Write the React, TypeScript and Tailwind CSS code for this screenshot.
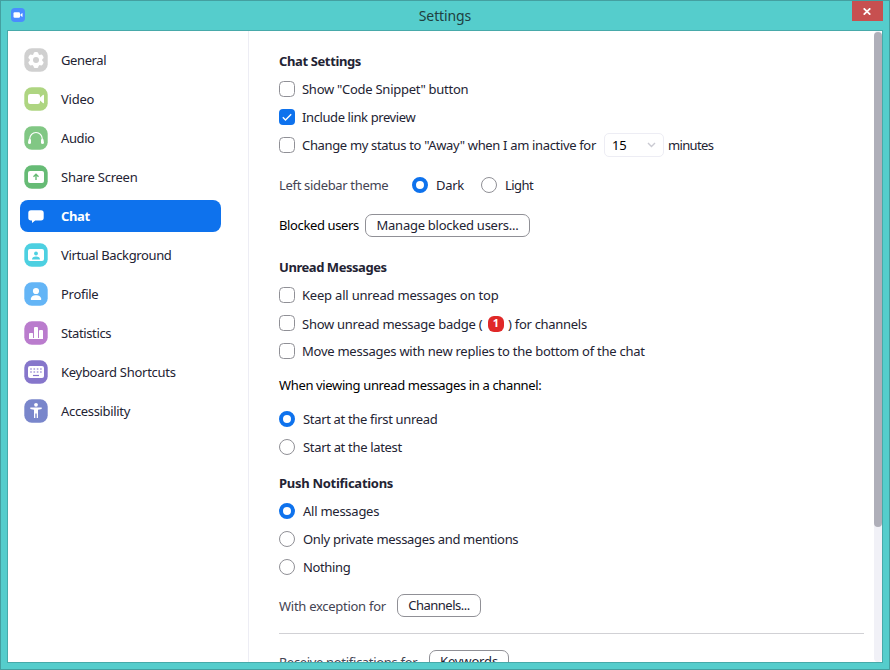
import type { ReactNode } from "react";

function Tile({ color, children }: { color: string; children: ReactNode }) {
  return (
    <svg width="24" height="24" viewBox="0 0 24 24" className="shrink-0">
      <rect x="0.3" y="0.3" width="23.4" height="23.4" rx="7.5" fill={color} />
      {children}
    </svg>
  );
}

const items: { label: string; spacing: string; icon: ReactNode; active?: boolean }[] = [
  {
    label: "General",
    spacing: "tracking-[-0.4px]",
    icon: (
      <Tile color="#d0d0d0">
        <g fill="#fff">
          {[0, 60, 120].map((a) => (
            <rect key={a} x="9.6" y="4" width="4.8" height="16" rx="1.5" transform={`rotate(${a} 12 12)`} />
          ))}
          <circle cx="12" cy="12" r="6.3" />
        </g>
        <circle cx="12" cy="12" r="3" fill="#d0d0d0" />
      </Tile>
    ),
  },
  {
    label: "Video",
    spacing: "tracking-[-0.25px]",
    icon: (
      <Tile color="#aed581">
        <rect x="4" y="7" width="12" height="10" rx="2.2" fill="#fff" />
        <path d="M16 10.500 18.900 8q1.100-.7 1.100.5v7q0 1.200-1.100.5L16 13.500z" fill="#fff" />
      </Tile>
    ),
  },
  {
    label: "Audio",
    spacing: "tracking-[-0.4px]",
    icon: (
      <Tile color="#81c784">
        <path d="M5.700 15V13a6.300 6.500 0 0 1 12.600 0v2" fill="none" stroke="#fff" strokeWidth="1.200" />
        <path d="M4.600 13.200q2.400-.8 2.400 1v2.300q0 1.500-1.500 1.500T4 16.500z" fill="#fff" />
        <path d="M19.400 13.200q-2.400-.8-2.400 1v2.300q0 1.500 1.500 1.500t1.500-1.500z" fill="#fff" />
      </Tile>
    ),
  },
  {
    label: "Share Screen",
    spacing: "tracking-[-0.25px]",
    icon: (
      <Tile color="#66bb75">
        <rect x="4" y="6" width="16" height="12" rx="2" fill="#fff" />
        <path d="M12 15V10M9.500 11.700 12 9.300l2.500 2.400" fill="none" stroke="#66bb75" strokeWidth="1.400" />
      </Tile>
    ),
  },
  {
    label: "Chat",
    spacing: "tracking-[-0.4px]",
    active: true,
    icon: (
      <svg width="24" height="24" viewBox="0 0 24 24" className="shrink-0">
        <path d="M7 6.200h10a2.700 2.700 0 0 1 2.700 2.700v4.800a2.700 2.700 0 0 1-2.700 2.700h-5.800L8 19v-2.600H7a2.700 2.700 0 0 1-2.700-2.700V8.900A2.700 2.700 0 0 1 7 6.200z" fill="#fff" />
      </svg>
    ),
  },
  {
    label: "Virtual Background",
    spacing: "tracking-[-0.38px]",
    icon: (
      <Tile color="#4dd0e1">
        <rect x="4" y="6" width="16" height="12" rx="2" fill="#fff" />
        <circle cx="12" cy="10.500" r="1.900" fill="#4dd0e1" />
        <path d="M8 16.500q0-3 4-3t4 3z" fill="#4dd0e1" />
      </Tile>
    ),
  },
  {
    label: "Profile",
    spacing: "tracking-[-0.28px]",
    icon: (
      <Tile color="#64b5f6">
        <circle cx="12" cy="9" r="3.100" fill="#fff" />
        <path d="M6.800 17.600c-.5-5.800 10.900-5.800 10.400 0q-.1.500-.7.500h-9q-.6 0-.7-.5z" fill="#fff" />
      </Tile>
    ),
  },
  {
    label: "Statistics",
    spacing: "tracking-[-0.38px]",
    icon: (
      <Tile color="#ba7ccd">
        <path d="M5 18v-5q0-1 1-1h2.400q.6 0 .6.600V17h1V7q0-1 1-1h2q1 0 1 1v10h1V10q0-1 1-1h2q1 0 1 1v8z" fill="#fff" />
      </Tile>
    ),
  },
  {
    label: "Keyboard Shortcuts",
    spacing: "tracking-[-0.28px]",
    icon: (
      <Tile color="#8676cb">
        <rect x="4" y="6" width="16" height="12" rx="2" fill="#fff" />
        <path d="M6.200 9h12M6.200 12h12" stroke="#8676cb" strokeOpacity="0.75" strokeWidth="1.500" strokeDasharray="1.600 1.700" />
        <path d="M9 15.500h6" stroke="#8676cb" strokeWidth="1.200" />
      </Tile>
    ),
  },
  {
    label: "Accessibility",
    spacing: "tracking-[-0.33px]",
    icon: (
      <Tile color="#7986cb">
        <circle cx="12" cy="5.800" r="1.900" fill="#fff" />
        <path d="M6.300 8.500h11.400v1.400L14 10.800V19h-1.300v-4.500h-1.400V19H10v-8.200l-3.700-.9z" fill="#fff" />
      </Tile>
    ),
  },
];

function Check({ on = false }: { on?: boolean }) {
  return (
    <svg width="16" height="16" viewBox="0 0 16 16" className="mr-[7px] shrink-0">
      {on ? (
        <>
          <rect width="16" height="16" rx="4" fill="#0e72ed" />
          <path d="M3.800 8.200l2.700 2.700 5.700-5.700" fill="none" stroke="#fff" strokeWidth="1.400" />
        </>
      ) : (
        <rect x="0.500" y="0.500" width="15" height="15" rx="4" fill="#fff" stroke="#909096" />
      )}
    </svg>
  );
}

function Radio({ on = false }: { on?: boolean }) {
  return (
    <svg width="16" height="16" viewBox="0 0 16 16" className="mr-2 shrink-0">
      {on ? (
        <circle cx="8" cy="8" r="6" fill="#fff" stroke="#0e72ed" strokeWidth="4" />
      ) : (
        <circle cx="8" cy="8" r="7.500" fill="#fff" stroke="#909096" />
      )}
    </svg>
  );
}

function Row({ className = "", children }: { className?: string; children: ReactNode }) {
  return <div className={`flex h-7 shrink-0 items-center whitespace-nowrap ${className}`}>{children}</div>;
}

function T({ className = "", children }: { className?: string; children: ReactNode }) {
  return <span className={`pt-[2px] ${className}`}>{children}</span>;
}

function Btn({ className, children }: { className: string; children: ReactNode }) {
  return (
    <button className={`flex h-[23px] items-center justify-center rounded-[7px] border border-[#909096] bg-white text-[#232333] ${className}`}>
      <T>{children}</T>
    </button>
  );
}

export default function App() {
  return (
    <div className="flex h-[670px] w-[890px] flex-col border border-[#449fa0] bg-[#55cdcc] px-[6px] pb-[6px] font-['Noto_Sans',sans-serif] text-[13px] text-[#232333]">
      <header className="flex h-[29px] shrink-0 justify-between">
        <svg width="14" height="14" viewBox="0 0 14 14" className="mt-[7px] ml-1">
          <rect width="14" height="14" rx="4" fill="#4a8cff" />
          <rect x="2.500" y="4.300" width="6.500" height="5.400" rx="1.200" fill="#fff" />
          <path d="M9.500 6.300 11.500 5v4l-2-1.300z" fill="#fff" />
        </svg>
        <h1 className="ml-[13px] pt-[4px] text-[14px] leading-[22px] tracking-[-0.1px] text-[#20403f]">Settings</h1>
        <button className="flex h-5 w-[31px] items-center justify-center bg-[#c75050]">
          <svg width="8" height="7" viewBox="0 0 8 7">
            <path d="M.7.3 7.300 6.700M7.300.3.7 6.700" stroke="#fff" strokeWidth="1.700" />
          </svg>
        </button>
      </header>
      <div className="flex min-h-0 flex-1 overflow-hidden border border-[#47aaaa] bg-white">
        <nav className="flex w-[241px] shrink-0 flex-col gap-[7px] border-r border-[#ededf4] pt-[13px] pl-3">
          {items.map((it) => (
            <div
              key={it.label}
              className={`flex h-8 w-[201px] shrink-0 items-center gap-[13px] rounded-[8px] pl-1 ${it.active ? "bg-[#0e72ed] font-bold text-white" : ""}`}
            >
              {it.icon}
              <T className={`whitespace-nowrap ${it.spacing}`}>{it.label}</T>
            </div>
          ))}
        </nav>
        <main className="flex min-w-0 flex-1 flex-col overflow-hidden pt-4 pr-[10px] pl-[30px]">
          <Row className="font-bold"><T className="tracking-[-0.38px]">Chat Settings</T></Row>
          <Row><Check /><T className="tracking-[-0.27px]">Show "Code Snippet" button</T></Row>
          <Row><Check on /><T className="tracking-[-0.4px]">Include link preview</T></Row>
          <Row>
            <Check />
            <T className="w-[302px] tracking-[-0.34px]">Change my status to "Away" when I am inactive for</T>
            <div className="flex h-6 w-[60px] items-center justify-between rounded-[5px] border border-[#ededf4] pr-[7px] pl-[7px]">
              <T className="tracking-[-0.3px] text-black">15</T>
              <svg width="9" height="6" viewBox="0 0 9 6"><path d="M1 1l3.500 3.500L8 1" fill="none" stroke="#cacad2" strokeWidth="1.400" /></svg>
            </div>
            <T className="ml-1 tracking-[-0.65px]">minutes</T>
          </Row>
          <Row className="mt-3">
            <T className="w-[133px] tracking-[-0.33px] text-[#444453]">Left sidebar theme</T>
            <Radio on /><T className="w-[45px] tracking-[-0.3px]">Dark</T>
            <Radio /><T className="tracking-[-0.55px]">Light</T>
          </Row>
          <Row className="mt-3">
            <T className="w-[86px] tracking-[-0.38px] text-black">Blocked users</T>
            <Btn className="w-[165px] tracking-[-0.26px]">Manage blocked users...</Btn>
          </Row>
          <Row className="mt-[14px] font-bold"><T className="tracking-[-0.45px]">Unread Messages</T></Row>
          <Row><Check /><T className="tracking-[-0.2px]">Keep all unread messages on top</T></Row>
          <Row>
            <Check />
            <span className="w-[186px] pt-[3px] tracking-[-0.26px]">Show unread message badge (</span>
            <span className="mt-px flex size-4 items-center justify-center rounded-[6px] bg-[#e02828] text-[11px] font-bold text-white">1</span>
            <span className="ml-1 pt-[3px] tracking-[-0.29px]">) for channels</span>
          </Row>
          <Row><Check /><T className="tracking-[-0.25px]">Move messages with new replies to the bottom of the chat</T></Row>
          <Row className="mt-[6px] text-black"><T className="tracking-[-0.36px]">When viewing unread messages in a channel:</T></Row>
          <Row className="mt-[6px]"><Radio on /><T className="tracking-[-0.33px]">Start at the first unread</T></Row>
          <Row><Radio /><T className="tracking-[-0.32px]">Start at the latest</T></Row>
          <Row className="mt-2 font-bold"><T className="tracking-[-0.28px]">Push Notifications</T></Row>
          <Row><Radio on /><T className="tracking-[-0.25px]">All messages</T></Row>
          <Row><Radio /><T className="tracking-[-0.32px]">Only private messages and mentions</T></Row>
          <Row><Radio /><T className="tracking-[-0.36px]">Nothing</T></Row>
          <Row className="mt-[10px]">
            <span className="w-[118px] pt-[4px] tracking-[-0.28px] text-[#444453]">With exception for</span>
            <Btn className="w-[84px] tracking-[-0.5px]">Channels...</Btn>
          </Row>
          <div className="mt-[14px] h-px shrink-0 bg-[#d1d1d5]" />
          <Row className="mt-[13px]">
            <span className="w-[150px] pt-[3px] tracking-[-0.32px] text-[#444453]">Receive notifications for</span>
            <Btn className="w-[80px] tracking-[-0.15px]">Keywords</Btn>
          </Row>
        </main>
        <div className="w-2 shrink-0 rounded-[4px] bg-[#f1f1f7] pt-px">
          <div className="h-[495px] rounded-[4px] bg-[#afafb9]" />
        </div>
      </div>
    </div>
  );
}
